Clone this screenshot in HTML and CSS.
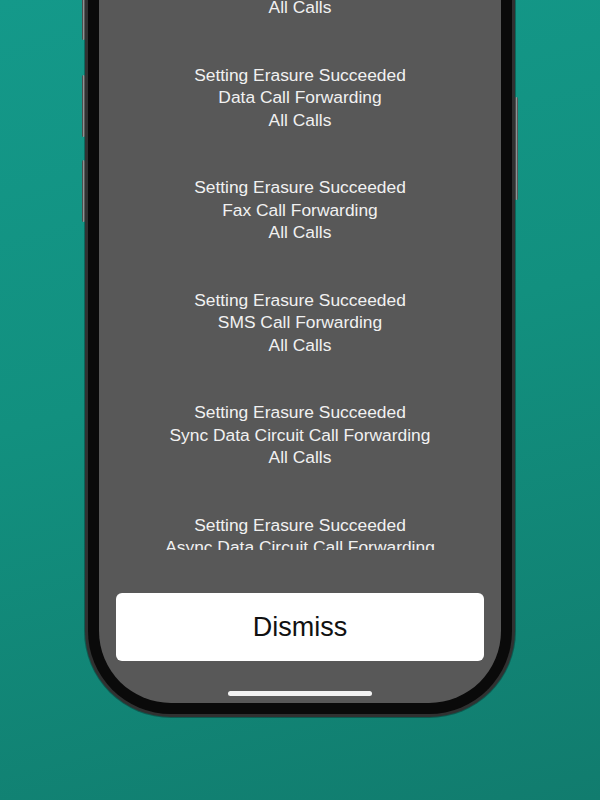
FILE: index.html
```html
<!DOCTYPE html>
<html>
<head>
<meta charset="utf-8">
<link rel="stylesheet" href="styles.css">
</head>
<body>
<div class="stage">
  <div class="phone">
    <span class="btn btn-l1"></span>
    <span class="btn btn-l2"></span>
    <span class="btn btn-l3"></span>
    <span class="btn btn-r1"></span>
    <div class="screen">
      <div class="messages">
        <div class="msg-list">
          <p class="msg">All Calls</p>
          <p class="msg">Setting Erasure Succeeded<br>Data Call Forwarding<br>All Calls</p>
          <p class="msg">Setting Erasure Succeeded<br>Fax Call Forwarding<br>All Calls</p>
          <p class="msg">Setting Erasure Succeeded<br>SMS Call Forwarding<br>All Calls</p>
          <p class="msg">Setting Erasure Succeeded<br>Sync Data Circuit Call Forwarding<br>All Calls</p>
          <p class="msg">Setting Erasure Succeeded<br>Async Data Circuit Call Forwarding<br>All Calls</p>
        </div>
      </div>
      <button class="dismiss">Dismiss</button>
      <div class="home-indicator"></div>
    </div>
  </div>
</div>
</body>
</html>
```
FILE: styles.css
```css
html, body {
  margin: 0;
  padding: 0;
}
body {
  width: 600px;
  height: 800px;
  overflow: hidden;
  background: linear-gradient(165deg, #14998a 0%, #12907f 45%, #117c6e 100%);
}
.stage {
  display: flex;
  justify-content: center;
}
.phone {
  position: relative;
  width: 402px;
  padding: 0 11px 11px 11px;
  background: #0a0a0a;
  border: 3px solid #303131;
  border-top: none;
  border-radius: 0 0 86px 86px;
  box-shadow: 0 0 0 1px rgba(0,0,0,0.3);
}
.btn {
  position: absolute;
  width: 3px;
  background: linear-gradient(90deg, #2a2c2c, #8d9393, #3a3c3c);
  border-radius: 2px;
}
.btn-l1 { left: -6px; top: -10px; height: 50px; }
.btn-l2 { left: -6px; top: 75px; height: 62px; }
.btn-l3 { left: -6px; top: 160px; height: 62px; }
.btn-r1 { right: -6px; top: 97px; height: 103px; }
.screen {
  height: 703px;
  background: #585858;
  border-radius: 0 0 72px 72px;
  display: flex;
  flex-direction: column;
  align-items: center;
  overflow: hidden;
}
.messages {
  height: 550px;
  width: 100%;
  overflow: hidden;
  flex-shrink: 0;
}
.msg-list {
  margin-top: -3.75px;
  display: flex;
  flex-direction: column;
  gap: 45px;
}
.msg {
  margin: 0;
  text-align: center;
  color: #f1f1f1;
  font-family: "Liberation Sans", Arial, sans-serif;
  font-size: 17.4px;
  line-height: 22.5px;
}
.dismiss {
  margin-top: 43px;
  width: 368px;
  height: 68px;
  flex-shrink: 0;
  border: none;
  border-radius: 6px;
  background: #ffffff;
  color: #111111;
  font-family: "Liberation Sans", Arial, sans-serif;
  font-size: 27px;
  padding: 0;
}
.home-indicator {
  margin-top: 30px;
  width: 144px;
  height: 5px;
  border-radius: 3px;
  background: #f2f2f2;
  flex-shrink: 0;
}
```
